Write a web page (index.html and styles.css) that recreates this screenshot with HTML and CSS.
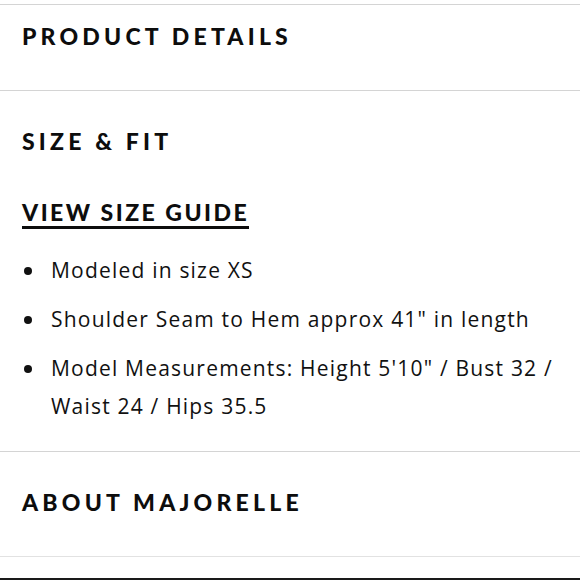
FILE: index.html
```html
<!DOCTYPE html>
<html>
<head>
<meta charset="utf-8">
<link rel="stylesheet" href="styles.css">
</head>
<body>
<div class="page">
  <section class="panel panel-first">
    <h2 class="panel-title">PRODUCT DETAILS</h2>
  </section>
  <section class="panel panel-open">
    <h2 class="panel-title">SIZE &amp; FIT</h2>
    <div class="panel-body">
      <a class="size-guide" href="#">VIEW SIZE GUIDE</a>
      <ul class="facts">
        <li>Modeled in size XS</li>
        <li>Shoulder Seam to Hem approx 41" in length</li>
        <li>Model Measurements: Height 5'10" / Bust 32 / Waist 24 / Hips 35.5</li>
      </ul>
    </div>
  </section>
  <section class="panel">
    <h2 class="panel-title">ABOUT MAJORELLE</h2>
  </section>
  <div class="next-block"></div>
</div>
</body>
</html>
```
FILE: styles.css
```css
html, body {
  margin: 0;
  padding: 0;
  background: #fff;
}
.page {
  padding-top: 4px;
  color: #111;
}
.panel {
  border-top: 1px solid #d4d4d4;
  padding: 37px 22px 41px;
}
.panel-first {
  padding-top: 18px;
}
.panel-open {
  padding-bottom: 26px;
}
.panel-title {
  margin: 0;
  font-family: Lato, "Liberation Sans", sans-serif;
  font-weight: 900;
  font-size: 23px;
  line-height: 26px;
  letter-spacing: 4.2px;
  color: #0d0d0d;
}
.panel-body {
  padding-top: 45px;
}
.size-guide {
  display: inline-block;
  font-family: Lato, "Liberation Sans", sans-serif;
  font-weight: 900;
  font-size: 23px;
  line-height: 26px;
  letter-spacing: 2.5px;
  color: #0d0d0d;
  text-decoration: none;
  border-bottom: 3px solid #0d0d0d;
  padding-bottom: 1px;
}
.facts {
  list-style: none;
  margin: 22px 0 0;
  padding: 0;
  font-family: "Open Sans", "Liberation Sans", sans-serif;
  font-size: 21px;
  line-height: 38px;
  letter-spacing: 1.2px;
  color: #111;
}
.facts li {
  position: relative;
  padding-left: 29px;
  margin-bottom: 11px;
}
.facts li:last-child {
  margin-bottom: 0;
}
.facts li::before {
  content: "";
  position: absolute;
  left: 2px;
  top: 16px;
  width: 8px;
  height: 8px;
  border-radius: 50%;
  background: #111;
}
.next-block {
  border-top: 1px solid #e2e2e2;
  height: 21px;
  border-bottom: 2px solid #1a1a1a;
}
```
